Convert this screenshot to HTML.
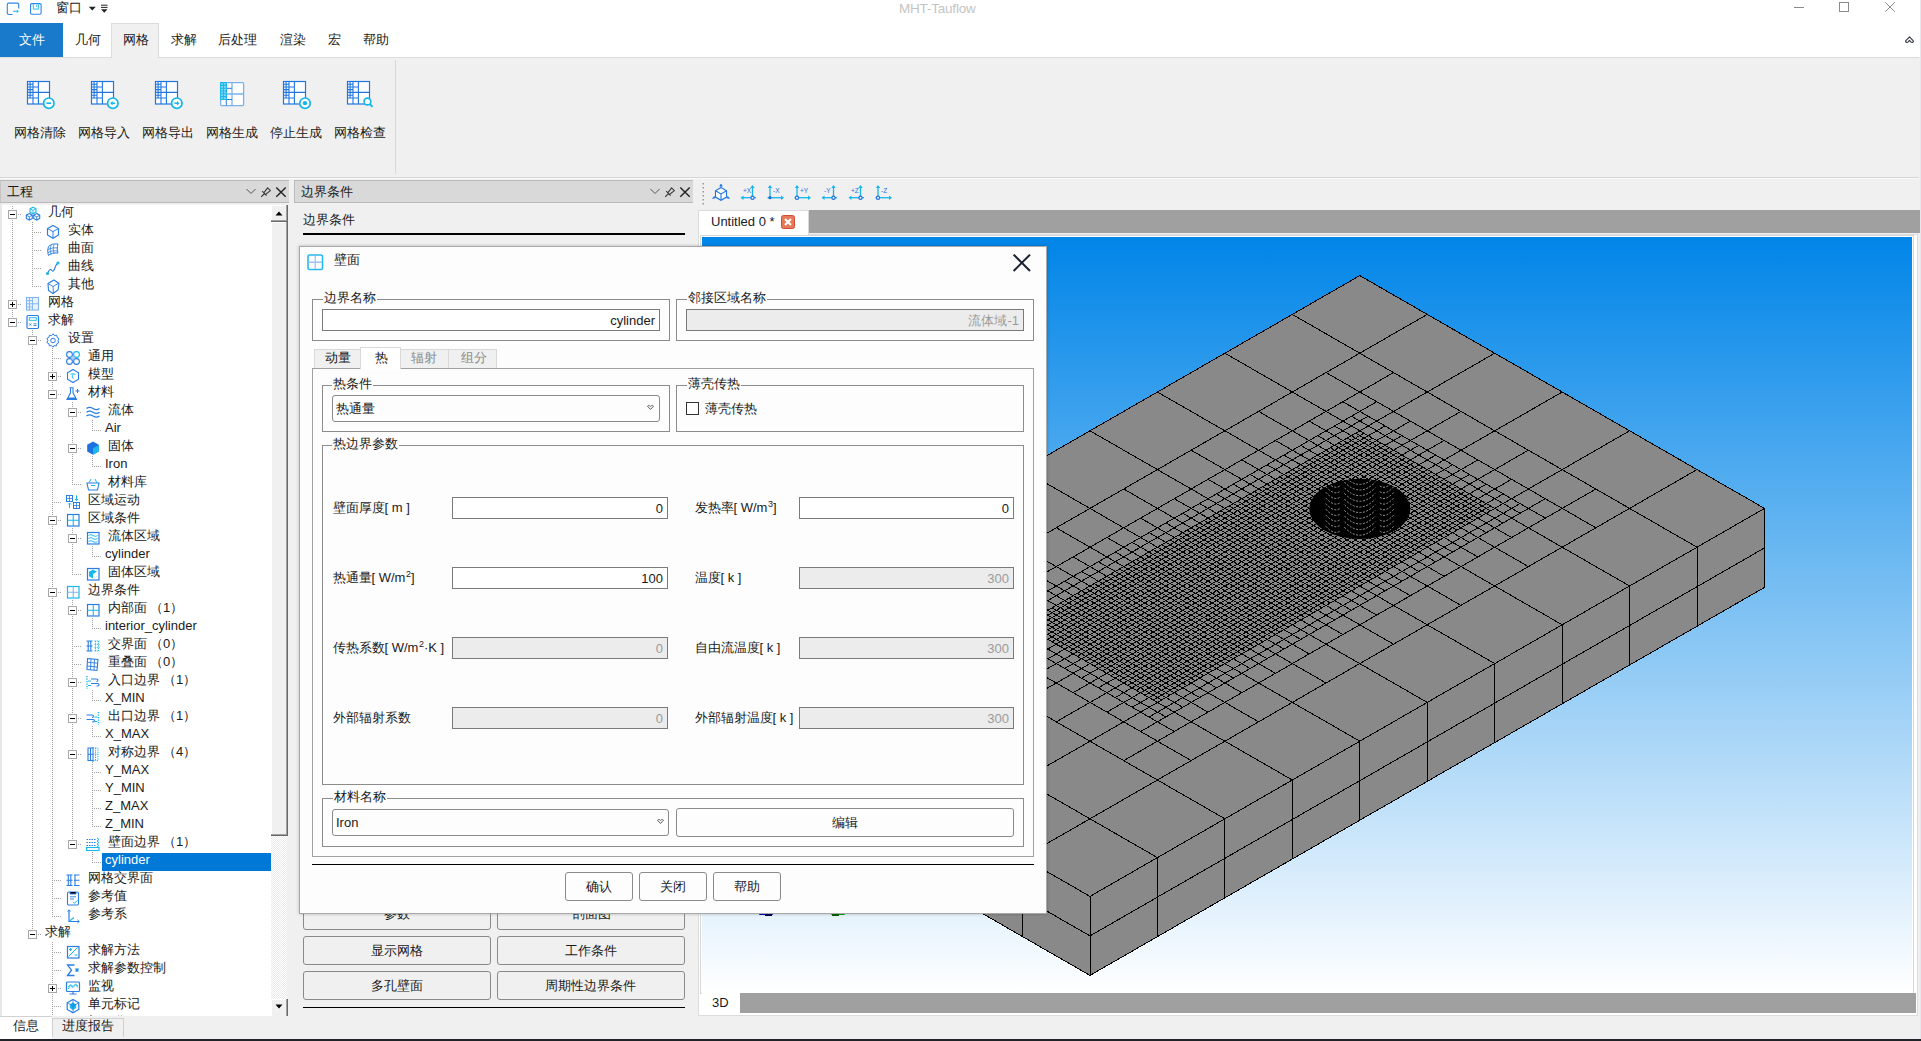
<!DOCTYPE html>
<html><head><meta charset="utf-8">
<style>
*{box-sizing:border-box;margin:0;padding:0}
html,body{width:1921px;height:1041px;overflow:hidden;background:#f0f0f0;font-family:"Liberation Sans",sans-serif;font-size:13px;color:#1a1a1a}
.a{position:absolute}
.t{position:absolute;white-space:nowrap;line-height:15px}
svg{position:absolute;overflow:visible}
</style></head><body>
<!-- ===== TITLE BAR ===== -->
<div class="a" style="left:0;top:0;width:1921px;height:57px;background:#fff"></div>
<svg style="left:0;top:0" width="120" height="20">
<path d="M12.5 14.5H8.8a1.5 1.5 0 0 1-1.5-1.5V4.6a1.5 1.5 0 0 1 1.5-1.5h8.4a1.5 1.5 0 0 1 1.5 1.5v4" fill="none" stroke="#2f86e8" stroke-width="1.1"/>
<path d="M13 11.3h5.2" stroke="#1ec0f0" stroke-width="1.1"/><path d="M16.8 13.3l2-2-2-1.9z" fill="#1ec0f0"/>
<rect x="30.5" y="3.6" width="10.6" height="10.6" rx="1.2" fill="none" stroke="#2f86e8" stroke-width="1.1"/>
<path d="M33.3 3.6v5.5h5v-5.5" fill="none" stroke="#1ec0f0" stroke-width="1"/><path d="M36.4 5.2v1.8" stroke="#1ec0f0" stroke-width="0.8"/>
<path d="M88.8 6.8h7l-3.5 3.6z" fill="#222"/>
<path d="M101 5.2h6.5M101 7.4h6.5" stroke="#222" stroke-width="1"/><path d="M101 9.2h6.5l-3.25 3.5z" fill="#222"/>
</svg>
<div class="t" style="left:56px;top:-0.5px;color:#1a1a1a">窗口</div>
<div class="t" style="left:899px;top:0.5px;color:#c4c4c4;font-size:13.5px;letter-spacing:-0.2px">MHT-Tauflow</div>
<svg style="left:1780px;top:0" width="141" height="50">
<path d="M14 7.5h10" stroke="#8a8a8a" stroke-width="1"/>
<rect x="59.5" y="2.5" width="9" height="9" fill="none" stroke="#8a8a8a" stroke-width="1"/>
<path d="M105.2 2.2l9.6 9.6M114.8 2.2l-9.6 9.6" stroke="#8a8a8a" stroke-width="1"/>
<path d="M129.5 36.9L125.9 40.7Q125.2 41.7 126.2 42.3Q127.4 42.8 128.2 41.9L129.5 40.3L130.8 41.9Q131.6 42.8 132.8 42.3Q133.8 41.7 133.1 40.7Z" fill="none" stroke="#3a3f48" stroke-width="1.2" stroke-linejoin="round"/>
</svg>
<div class="a" style="left:1920px;top:0;width:1px;height:1039px;background:#e4e8ee"></div>

<!-- ===== MENU ===== -->
<div class="a" style="left:0;top:23px;width:63px;height:35px;background:#1979ca"></div>
<div class="a" style="left:111px;top:23px;width:48px;height:35px;background:#f0f0f0;border:1px solid #dcdcdc;border-bottom:none"></div>
<div class="a" style="left:0;top:57px;width:111px;height:1px;background:#dcdcdc"></div>
<div class="a" style="left:159px;top:57px;width:1760px;height:1px;background:#dcdcdc"></div>
<div class="t" style="left:19px;top:31.5px;color:#fff">文件</div>
<div class="t" style="left:74.5px;top:31.5px">几何</div>
<div class="t" style="left:122.5px;top:31.5px">网格</div>
<div class="t" style="left:170.5px;top:31.5px">求解</div>
<div class="t" style="left:218px;top:31.5px">后处理</div>
<div class="t" style="left:279.5px;top:31.5px">渲染</div>
<div class="t" style="left:327.5px;top:31.5px">宏</div>
<div class="t" style="left:362.5px;top:31.5px">帮助</div>

<!-- ===== RIBBON ===== -->
<div class="a" style="left:0;top:177px;width:1919px;height:1px;background:#d5d5d5"></div><div class="a" style="left:0;top:178px;width:1919px;height:1px;background:#fafafa"></div>
<div class="a" style="left:395px;top:60px;width:1px;height:114px;background:#d8d8d8"></div>
<svg style="left:27px;top:81px" width="32" height="32">

<rect x="0.5" y="0.5" width="22" height="22.5" fill="#fff" stroke="#1f76e0" stroke-width="1.2"/>
<path d="M11.4 0.5v22.5M0.5 11.4h22M6 0.5v22.5M6 6h5.4M6 17h5.4M3.1 0.5v16.5M0.5 3.2h5.5M0.5 6h5.5M0.5 8.6h5.5M0.5 11.4h5.5M0.5 14.2h5.5M0.5 17h5.5" fill="none" stroke="#1f76e0" stroke-width="1.1"/>

<circle cx="21.8" cy="22.2" r="5.2" fill="#fff" stroke="#10b6e8" stroke-width="1.7"/><path d="M19.4 22.2h4.8" stroke="#10b6e8" stroke-width="1.6"/>
</svg>
<svg style="left:91px;top:81px" width="32" height="32">

<rect x="0.5" y="0.5" width="22" height="22.5" fill="#fff" stroke="#1f76e0" stroke-width="1.2"/>
<path d="M11.4 0.5v22.5M0.5 11.4h22M6 0.5v22.5M6 6h5.4M6 17h5.4M3.1 0.5v16.5M0.5 3.2h5.5M0.5 6h5.5M0.5 8.6h5.5M0.5 11.4h5.5M0.5 14.2h5.5M0.5 17h5.5" fill="none" stroke="#1f76e0" stroke-width="1.1"/>

<circle cx="21.8" cy="22.2" r="5.2" fill="#fff" stroke="#10b6e8" stroke-width="1.7"/><path d="M24.2 22.2h-3.6" stroke="#10b6e8" stroke-width="1.5"/><path d="M19.2 22.2l2.4-2.2v4.4z" fill="#10b6e8"/>
</svg>
<svg style="left:155px;top:81px" width="32" height="32">

<rect x="0.5" y="0.5" width="22" height="22.5" fill="#fff" stroke="#1f76e0" stroke-width="1.2"/>
<path d="M11.4 0.5v22.5M0.5 11.4h22M6 0.5v22.5M6 6h5.4M6 17h5.4M3.1 0.5v16.5M0.5 3.2h5.5M0.5 6h5.5M0.5 8.6h5.5M0.5 11.4h5.5M0.5 14.2h5.5M0.5 17h5.5" fill="none" stroke="#1f76e0" stroke-width="1.1"/>

<circle cx="21.8" cy="22.2" r="5.2" fill="#fff" stroke="#10b6e8" stroke-width="1.7"/><path d="M19.4 22.2h3.6" stroke="#10b6e8" stroke-width="1.5"/><path d="M24.4 22.2l-2.4-2.2v4.4z" fill="#10b6e8"/>
</svg>
<svg style="left:220px;top:82px" width="32" height="32">
<rect x="0.6" y="0.6" width="23" height="23" rx="1" fill="#fff" stroke="#7ab2ee" stroke-width="1.3"/>
<path d="M12 0.6v23M0.6 12h23" stroke="#7ab2ee" stroke-width="1.3"/>
<path d="M6.3 0.6v23M6.3 6.3h5.7M6.3 17.5h5.7" stroke="#2a7fe6" stroke-width="1"/>
<rect x="0.6" y="0.6" width="5.7" height="16.9" fill="#8fd8f4"/>
<path d="M0.6 0.6h5.7v16.9H0.6zM3.4 0.6v16.9M0.6 3.4h5.7M0.6 6.2h5.7M0.6 9h5.7M0.6 11.8h5.7M0.6 14.6h5.7" fill="none" stroke="#16b9ea" stroke-width="1.1"/>
</svg>
<svg style="left:283px;top:81px" width="32" height="32">

<rect x="0.5" y="0.5" width="22" height="22.5" fill="#fff" stroke="#1f76e0" stroke-width="1.2"/>
<path d="M11.4 0.5v22.5M0.5 11.4h22M6 0.5v22.5M6 6h5.4M6 17h5.4M3.1 0.5v16.5M0.5 3.2h5.5M0.5 6h5.5M0.5 8.6h5.5M0.5 11.4h5.5M0.5 14.2h5.5M0.5 17h5.5" fill="none" stroke="#1f76e0" stroke-width="1.1"/>

<circle cx="22" cy="22.2" r="5.2" fill="#fff" stroke="#10b6e8" stroke-width="1.7"/><circle cx="22" cy="22.2" r="2.1" fill="#10b6e8"/>
</svg>
<svg style="left:347px;top:81px" width="32" height="32">

<rect x="0.5" y="0.5" width="22" height="22.5" fill="#fff" stroke="#1f76e0" stroke-width="1.2"/>
<path d="M11.4 0.5v22.5M0.5 11.4h22M6 0.5v22.5M6 6h5.4M6 17h5.4M3.1 0.5v16.5M0.5 3.2h5.5M0.5 6h5.5M0.5 8.6h5.5M0.5 11.4h5.5M0.5 14.2h5.5M0.5 17h5.5" fill="none" stroke="#1f76e0" stroke-width="1.1"/>

<circle cx="20.4" cy="20.5" r="3.4" fill="#fff" stroke="#10b6e8" stroke-width="1.6"/><path d="M22.8 23l2.8 2.8" stroke="#10b6e8" stroke-width="1.8"/>
</svg>
<div class="t" style="left:13.75px;top:124.5px">网格清除</div>
<div class="t" style="left:77.75px;top:124.5px">网格导入</div>
<div class="t" style="left:141.75px;top:124.5px">网格导出</div>
<div class="t" style="left:205.75px;top:124.5px">网格生成</div>
<div class="t" style="left:269.75px;top:124.5px">停止生成</div>
<div class="t" style="left:333.75px;top:124.5px">网格检查</div>

<!-- ===== LEFT DOCK ===== -->
<div class="a" style="left:0;top:180px;width:289px;height:23px;background:#d9d9d9;border-top:1px solid #b9b9b9;border-bottom:1px solid #b9b9b9;border-left:1px solid #c4c4c4"></div>
<div class="t" style="left:7px;top:183.5px">工程</div>
<svg style="left:240px;top:180px" width="50" height="23">
<path d="M6.5 9l4.5 4.5 4.5-4.5" fill="none" stroke="#555" stroke-width="1"/>
<path d="M21.2 16.8l3.3-3.3M22.2 11.2l4.4 4.5M24 12.6l3.6-4.8 2.8 2.8-4.7 3.6" fill="none" stroke="#3a3a3a" stroke-width="1.1" stroke-linejoin="round"/>
<path d="M36.3 7.4l9.4 9.3M45.7 7.4l-9.4 9.3" stroke="#222" stroke-width="1.4"/>
</svg>
<div class="a" style="left:0;top:203px;width:2px;height:813px;background:#e8e8e8"></div>
<div class="a" style="left:271px;top:205px;width:17px;height:811px;background:#f0f0f0"></div>
<div class="a" style="left:271px;top:205px;width:17px;height:17px;background:#f0f0f0;border-right:1px solid #696969;border-bottom:1px solid #696969;box-shadow:inset -1px -1px #a0a0a0, inset 1px 1px #fff"></div>
<svg style="left:271px;top:205px" width="17" height="17"><path d="M4.5 10.5h7l-3.5-4z" fill="#000"/></svg>
<div class="a" style="left:271px;top:222px;width:17px;height:614px;background:#f0f0f0;border-right:1px solid #696969;border-bottom:1px solid #696969;box-shadow:inset -1px -1px #a0a0a0, inset 1px 1px #fff"></div>
<div class="a" style="left:271px;top:836px;width:16px;height:163px;background:repeating-conic-gradient(#fff 0 25%,#eaeaea 0 50%) 0 0/2px 2px"></div>
<div class="a" style="left:271px;top:999px;width:17px;height:17px;background:#f0f0f0;border-right:1px solid #696969;box-shadow:inset -1px 0 #a0a0a0, inset 1px 1px #fff"></div>
<svg style="left:271px;top:999px" width="17" height="17"><path d="M4.5 5.5h7l-3.5 4z" fill="#000"/></svg>
<div class="a" style="left:288px;top:203px;width:1px;height:813px;background:#f0f0f0"></div>
<div class="a" style="left:0;top:1016px;width:52px;height:23px;background:#fff;border-top:1px solid #d0d0d0"></div>
<div class="a" style="left:52px;top:1018px;width:72px;height:19px;background:#f0f0f0;border:1px solid #d0d0d0;border-bottom:none"></div>
<div class="t" style="left:12.5px;top:1018px">信息</div>
<div class="t" style="left:62px;top:1018px">进度报告</div>
<div class="a" style="left:2px;top:203px;width:269px;height:2px;background:#f0f0f0"></div>
<div class="a" style="left:2px;top:205px;width:269px;height:811px;overflow:hidden;background:#fff">
<svg style="left:0;top:0" width="269" height="812"><path d="M10.5 -1V19M12 9.5H20M10.5 17V37M30.5 17V37M32 27.5H40M10.5 35V55M30.5 35V55M32 45.5H40M10.5 53V73M30.5 53V73M32 63.5H40M10.5 71V91M30.5 71V82M32 81.5H40M10.5 89V109M12 99.5H20M10.5 107V118M12 117.5H20M30.5 125V145M32 135.5H40M30.5 143V163M50.5 143V163M52 153.5H60M30.5 161V181M50.5 161V181M52 171.5H60M30.5 179V199M50.5 179V199M52 189.5H60M30.5 197V217M50.5 197V217M70.5 197V217M72 207.5H80M30.5 215V235M50.5 215V235M70.5 215V235M90.5 215V226M92 225.5H100M30.5 233V253M50.5 233V253M70.5 233V253M72 243.5H80M30.5 251V271M50.5 251V271M70.5 251V271M90.5 251V262M92 261.5H100M30.5 269V289M50.5 269V289M70.5 269V280M72 279.5H80M30.5 287V307M50.5 287V307M52 297.5H60M30.5 305V325M50.5 305V325M52 315.5H60M30.5 323V343M50.5 323V343M70.5 323V343M72 333.5H80M30.5 341V361M50.5 341V361M70.5 341V361M90.5 341V352M92 351.5H100M30.5 359V379M50.5 359V379M70.5 359V370M72 369.5H80M30.5 377V397M50.5 377V397M52 387.5H60M30.5 395V415M50.5 395V415M70.5 395V415M72 405.5H80M30.5 413V433M50.5 413V433M70.5 413V433M90.5 413V424M92 423.5H100M30.5 431V451M50.5 431V451M70.5 431V451M72 441.5H80M30.5 449V469M50.5 449V469M70.5 449V469M72 459.5H80M30.5 467V487M50.5 467V487M70.5 467V487M72 477.5H80M30.5 485V505M50.5 485V505M70.5 485V505M90.5 485V496M92 495.5H100M30.5 503V523M50.5 503V523M70.5 503V523M72 513.5H80M30.5 521V541M50.5 521V541M70.5 521V541M90.5 521V532M92 531.5H100M30.5 539V559M50.5 539V559M70.5 539V559M72 549.5H80M30.5 557V577M50.5 557V577M70.5 557V577M90.5 557V577M92 567.5H100M30.5 575V595M50.5 575V595M70.5 575V595M90.5 575V595M92 585.5H100M30.5 593V613M50.5 593V613M70.5 593V613M90.5 593V613M92 603.5H100M30.5 611V631M50.5 611V631M70.5 611V631M90.5 611V622M92 621.5H100M30.5 629V649M50.5 629V649M70.5 629V640M72 639.5H80M30.5 647V667M50.5 647V667M90.5 647V658M92 657.5H100M30.5 665V685M50.5 665V685M52 675.5H60M30.5 683V703M50.5 683V703M52 693.5H60M30.5 701V721M50.5 701V712M52 711.5H60M30.5 719V730M32 729.5H40M50.5 737V757M52 747.5H60M50.5 755V775M52 765.5H60M50.5 773V793M52 783.5H60M50.5 791V811M52 801.5H60M50.5 809V820M52 819.5H60" stroke="#a0a0a0" stroke-width="1" stroke-dasharray="1 1" fill="none" shape-rendering="crispEdges"/><rect x="6.5" y="5.5" width="8" height="8" fill="#fff" stroke="#a8a8a8" stroke-width="1"/><path d="M8 9.5h5" stroke="#000" stroke-width="1"/><g transform="translate(23,1)"><path d="M8 1.2l3 1.6v3.3l-3 1.6-3-1.6V2.8z" fill="none" stroke="#17b8ec" stroke-width="1.1"/><path d="M5 2.8l3 1.6 3-1.6M8 4.4v3.3" fill="none" stroke="#17b8ec" stroke-width="0.9"/><path d="M4.3 7.6l3 1.6v3.3l-3 1.6-3-1.6V9.2zM11.7 7.6l3 1.6v3.3l-3 1.6-3-1.6V9.2z" fill="none" stroke="#2a7de1" stroke-width="1.1"/><path d="M1.3 9.2l3 1.6 3-1.6M4.3 10.8v3.3M8.7 9.2l3 1.6 3-1.6M11.7 10.8v3.3" fill="none" stroke="#2a7de1" stroke-width="0.9"/></g><g transform="translate(43,19)"><path d="M8 1.5l5.5 3v6.5L8 14.2 2.5 11V4.5z" fill="none" stroke="#2a7de1" stroke-width="1.2"/><path d="M2.5 4.5L8 7.6l5.5-3.1M8 7.6v6.6" fill="none" stroke="#2a7de1" stroke-width="1"/></g><g transform="translate(43,37)"><path d="M3.5 4.5c2-2 5-3 9.5-2.5-1 3-1 6 0 9-4.5-.5-7.5.5-9.5 2.5-1-3-1-6 0-9z" fill="none" stroke="#2a7de1" stroke-width="1"/><path d="M6 3.2c-1 3-1 6.5 0 9.5M9 2.4c-1 3-1 6.5 0 9.5M2.8 7.5c3-1.5 6-2 10-1.5M3 10.5c3-1.5 6-2 10-1.5" fill="none" stroke="#2a7de1" stroke-width="0.8"/></g><g transform="translate(43,55)"><path d="M2.5 13.5c1-3 3-5 4-3.5s2 2 3-1 2-5 3.5-6" fill="none" stroke="#2a7de1" stroke-width="1.1"/><circle cx="2.5" cy="13.5" r="1.6" fill="#17b8ec"/><circle cx="13" cy="3" r="1.6" fill="#17b8ec"/></g><g transform="translate(43,73)"><path d="M3 5.5l6-3.5 5 3.5-1 6.5-5 3.5-4.5-3z" fill="none" stroke="#2a7de1" stroke-width="1.1"/><path d="M3 5.5l5 3 6-3.5M8 8.5l.5 7" fill="none" stroke="#2a7de1" stroke-width="0.9"/></g><rect x="6.5" y="95.5" width="8" height="8" fill="#fff" stroke="#a8a8a8" stroke-width="1"/><path d="M8 99.5h5" stroke="#000" stroke-width="1"/><path d="M10.5 97v5" stroke="#000" stroke-width="1"/><g transform="translate(23,91)"><rect x="1.5" y="1.5" width="12" height="12.5" fill="#eaf3fd" stroke="#7fb4ee" stroke-width="1.1"/><path d="M7.5 1.5v12.5M1.5 7.8h12M4.5 1.5v12.5M1.5 4.6h6M1.5 11h6" stroke="#7fb4ee" stroke-width="0.9"/></g><rect x="6.5" y="113.5" width="8" height="8" fill="#fff" stroke="#a8a8a8" stroke-width="1"/><path d="M8 117.5h5" stroke="#000" stroke-width="1"/><g transform="translate(23,109)"><rect x="2" y="1.5" width="11.5" height="13" rx="1.2" fill="none" stroke="#2a7de1" stroke-width="1.2"/><rect x="4.3" y="3.7" width="7" height="2.6" fill="none" stroke="#17b8ec" stroke-width="0.9"/><path d="M4.3 9.5l2 2M6.3 9.5l-2 2M8.5 9.8h3M8.5 11.5h3" stroke="#2a7de1" stroke-width="0.9"/></g><rect x="26.5" y="131.5" width="8" height="8" fill="#fff" stroke="#a8a8a8" stroke-width="1"/><path d="M28 135.5h5" stroke="#000" stroke-width="1"/><g transform="translate(43,127)"><path d="M8 1.8l1.5 1.7 2.2-.3.4 2.2 1.9 1.2-1 2 .9 2-2 1.1-.5 2.2-2.2-.3L8 15.2l-1.5-1.6-2.2.3-.4-2.2-2-1.2 1-2-1-2 2-1.1.5-2.2 2.2.3z" fill="none" stroke="#2a7de1" stroke-width="1"/><circle cx="8" cy="8.5" r="2.3" fill="none" stroke="#2a7de1" stroke-width="1"/></g><g transform="translate(63,145)"><circle cx="4.5" cy="4.5" r="2.9" fill="none" stroke="#2a7de1" stroke-width="1.1"/><circle cx="11.5" cy="4.5" r="2.9" fill="none" stroke="#17b8ec" stroke-width="1.1"/><circle cx="4.5" cy="11.5" r="2.9" fill="none" stroke="#2a7de1" stroke-width="1.1"/><circle cx="11.5" cy="11.5" r="2.9" fill="none" stroke="#2a7de1" stroke-width="1.1"/><rect x="6" y="6" width="4" height="4" fill="#7fb4ee" opacity=".6"/></g><rect x="46.5" y="167.5" width="8" height="8" fill="#fff" stroke="#a8a8a8" stroke-width="1"/><path d="M48 171.5h5" stroke="#000" stroke-width="1"/><path d="M50.5 169v5" stroke="#000" stroke-width="1"/><g transform="translate(63,163)"><path d="M8 1.5l5.5 3.2v6.6L8 14.5l-5.5-3.2V4.7z" fill="none" stroke="#2a7de1" stroke-width="1.1"/><path d="M5.5 6.3c1-.7 3-.7 5 0M8 6.3c-1 1.5-1 3.5.5 4.5" fill="none" stroke="#17b8ec" stroke-width="1"/></g><rect x="46.5" y="185.5" width="8" height="8" fill="#fff" stroke="#a8a8a8" stroke-width="1"/><path d="M48 189.5h5" stroke="#000" stroke-width="1"/><g transform="translate(63,181)"><path d="M4.5 1.8h4M5.5 1.8v5L2 13.5h9.5L8 6.8v-5" fill="none" stroke="#2a7de1" stroke-width="1.1"/><path d="M3 11.5h7.5l1 2.3H2z" fill="#2a7de1"/><path d="M12.5 3v4M10.5 5h4" stroke="#2a7de1" stroke-width="1"/></g><rect x="66.5" y="203.5" width="8" height="8" fill="#fff" stroke="#a8a8a8" stroke-width="1"/><path d="M68 207.5h5" stroke="#000" stroke-width="1"/><g transform="translate(83,199)"><path d="M1.5 4.5c2-1.5 4-1.5 6.5 0s4.5 1.5 6.5 0M1.5 8.3c2-1.5 4-1.5 6.5 0s4.5 1.5 6.5 0M1.5 12c2-1.5 4-1.5 6.5 0s4.5 1.5 6.5 0" fill="none" stroke="#2a7de1" stroke-width="1.2"/></g><rect x="66.5" y="239.5" width="8" height="8" fill="#fff" stroke="#a8a8a8" stroke-width="1"/><path d="M68 243.5h5" stroke="#000" stroke-width="1"/><g transform="translate(83,235)"><path d="M8 1.5l5.8 3.3v6.6L8 14.7l-5.8-3.3V4.8z" fill="#1e6fe0"/><path d="M8 8.2l5.8-3.3v6.5L8 14.7z" fill="#17b8ec"/></g><g transform="translate(83,271)"><path d="M2 7h12l-1.5 7h-9z" fill="none" stroke="#2a7de1" stroke-width="1.1"/><path d="M4 7l2-4M12 7l-2-4M6 9.5h4" stroke="#17b8ec" stroke-width="1"/></g><g transform="translate(63,289)"><rect x="1.5" y="1.5" width="6" height="6" fill="none" stroke="#2a7de1" stroke-width="1"/><path d="M4.5 1.5v6M1.5 4.5h6" stroke="#2a7de1" stroke-width=".8"/><rect x="8.5" y="8.5" width="6" height="6" fill="none" stroke="#2a7de1" stroke-width="1"/><path d="M11.5 8.5v6M8.5 11.5h6" stroke="#2a7de1" stroke-width=".8"/><path d="M4.5 9v5M3 10.5l1.5-1.5 1.5 1.5M11.5 1.5v5M10 5l1.5 1.5L13 5" fill="none" stroke="#17b8ec" stroke-width="1"/></g><rect x="46.5" y="311.5" width="8" height="8" fill="#fff" stroke="#a8a8a8" stroke-width="1"/><path d="M48 315.5h5" stroke="#000" stroke-width="1"/><g transform="translate(63,307)"><rect x="2.5" y="2.5" width="11.5" height="11.5" fill="none" stroke="#2a7de1" stroke-width="1.2"/><path d="M8.25 2.5v11.5M2.5 8.25h11.5" stroke="#17b8ec" stroke-width="1.1"/></g><rect x="66.5" y="329.5" width="8" height="8" fill="#fff" stroke="#a8a8a8" stroke-width="1"/><path d="M68 333.5h5" stroke="#000" stroke-width="1"/><g transform="translate(83,325)"><rect x="2.5" y="2.5" width="11.5" height="11.5" fill="none" stroke="#2a7de1" stroke-width="1.2"/><path d="M3.5 5.5c1.5-1 3-1 4.5 0s3 1 4.5 0M3.5 8.5c1.5-1 3-1 4.5 0s3 1 4.5 0M3.5 11.5c1.5-1 3-1 4.5 0s3 1 4.5 0" fill="none" stroke="#17b8ec" stroke-width="1"/></g><g transform="translate(83,361)"><rect x="2.5" y="2.5" width="11.5" height="11.5" fill="none" stroke="#2a7de1" stroke-width="1.2"/><path d="M8 3.5l4 2.2v4.6L8 12.5l-4-2.2V5.7z" fill="#17b8ec"/><path d="M8 8v4.5l4-2.2V5.7z" fill="#fff"/></g><rect x="46.5" y="383.5" width="8" height="8" fill="#fff" stroke="#a8a8a8" stroke-width="1"/><path d="M48 387.5h5" stroke="#000" stroke-width="1"/><g transform="translate(63,379)"><rect x="2.5" y="2.5" width="11.5" height="11.5" fill="none" stroke="#17b8ec" stroke-width="1.2"/><path d="M8.25 2.5v11.5M2.5 8.25h11.5" stroke="#7fb4ee" stroke-width="1.1"/></g><rect x="66.5" y="401.5" width="8" height="8" fill="#fff" stroke="#a8a8a8" stroke-width="1"/><path d="M68 405.5h5" stroke="#000" stroke-width="1"/><g transform="translate(83,397)"><rect x="2.5" y="2.5" width="11.5" height="11.5" fill="none" stroke="#2a7de1" stroke-width="1.2"/><path d="M8.25 2.5v11.5M2.5 8.25h11.5" stroke="#17b8ec" stroke-width="1.1"/></g><g transform="translate(83,433)"><path d="M1.5 3h6M1.5 13h6M3.2 3v10M5.8 3v10M1.5 8h6" stroke="#2a7de1" stroke-width="1.1"/><path d="M9.5 3h5M9.5 6.3h5M9.5 9.7h5M9.5 13h5M10.5 3v10M13.5 3v10" stroke="#17b8ec" stroke-width="1" stroke-dasharray="1.2 1"/></g><g transform="translate(83,451)"><path d="M2.5 2.5l10.5 1-1 11-10-1z" fill="none" stroke="#2a7de1" stroke-width="1.1"/><path d="M6 2.8l-.5 11M9.5 3.2l-.5 11M2 6.2l10.7 1M1.8 10l10.6 1" stroke="#2a7de1" stroke-width="0.9"/></g><rect x="66.5" y="473.5" width="8" height="8" fill="#fff" stroke="#a8a8a8" stroke-width="1"/><path d="M68 477.5h5" stroke="#000" stroke-width="1"/><g transform="translate(83,469)"><path d="M6 5h5.5c2 0 2 2.5 0 2.5M6 9.5h6.5c2 0 2 2.5 0 2.5h-1" fill="none" stroke="#2a7de1" stroke-width="1.1"/><path d="M2 2v13" stroke="#17b8ec" stroke-width="1.4" stroke-dasharray="1.3 1.2"/><path d="M3 7h3M3 11.5h3" stroke="#17b8ec" stroke-width="1"/></g><rect x="66.5" y="509.5" width="8" height="8" fill="#fff" stroke="#a8a8a8" stroke-width="1"/><path d="M68 513.5h5" stroke="#000" stroke-width="1"/><g transform="translate(83,505)"><path d="M1.5 5h5.5c2 0 2 2.5 0 2.5M1.5 9.5h6.5c2 0 2 2.5 0 2.5H7" fill="none" stroke="#2a7de1" stroke-width="1.1"/><path d="M13.5 2v13" stroke="#17b8ec" stroke-width="1.4" stroke-dasharray="1.3 1.2"/><path d="M9.5 7h3M9.5 11.5h3" stroke="#17b8ec" stroke-width="1"/></g><rect x="66.5" y="545.5" width="8" height="8" fill="#fff" stroke="#a8a8a8" stroke-width="1"/><path d="M68 549.5h5" stroke="#000" stroke-width="1"/><g transform="translate(83,541)"><path d="M8 2H3v12.5h5M3 8.2h5M5.5 2v12.5" fill="none" stroke="#2a7de1" stroke-width="1.1"/><path d="M8 2h5v12.5H8M8 8.2h5M10.5 2v12.5" fill="none" stroke="#17b8ec" stroke-width="1" stroke-dasharray="1.2 1"/><path d="M8 1v15" stroke="#2a7de1" stroke-width="1"/></g><rect x="66.5" y="635.5" width="8" height="8" fill="#fff" stroke="#a8a8a8" stroke-width="1"/><path d="M68 639.5h5" stroke="#000" stroke-width="1"/><g transform="translate(83,631)"><path d="M1.5 3.5h10M1.5 6.5h10M1.5 9.5h10" stroke="#2a7de1" stroke-width="1" stroke-dasharray="1.5 1"/><path d="M12 2l2 1.5-2 1.5M12 5l2 1.5-2 1.5M12 8l2 1.5-2 1.5" fill="none" stroke="#17b8ec" stroke-width="1"/><rect x="1.5" y="11.5" width="12.5" height="3" fill="none" stroke="#17b8ec" stroke-width="1.1"/></g><g transform="translate(63,667)"><path d="M1.5 3h6M1.5 13.5h6M3.3 3v10.5M5.8 3v10.5M1.5 8.2h6" stroke="#2a7de1" stroke-width="1.1"/><path d="M9 3h5.5M9 8.2h5.5M9 13.5h5.5M10 3v10.5" stroke="#2a7de1" stroke-width="1.1"/></g><g transform="translate(63,685)"><rect x="2.5" y="2" width="11" height="13" rx="1.2" fill="none" stroke="#2a7de1" stroke-width="1.1"/><path d="M5 2v2h6V2M5 6.8h6M5 9h4" stroke="#2a7de1" stroke-width="0.9"/><path d="M8 12l1.5 1.2 3-2.8" fill="none" stroke="#17b8ec" stroke-width="1"/></g><g transform="translate(63,703)"><path d="M4 2v11.5h10" fill="none" stroke="#2a7de1" stroke-width="1.2"/><path d="M2.5 3.5L4 1.8l1.5 1.7M12.5 12l1.8 1.5-1.8 1.5" fill="none" stroke="#2a7de1" stroke-width="1"/><path d="M4 13.5l5-4" stroke="#17b8ec" stroke-width="1.1"/></g><rect x="26.5" y="725.5" width="8" height="8" fill="#fff" stroke="#a8a8a8" stroke-width="1"/><path d="M28 729.5h5" stroke="#000" stroke-width="1"/><g transform="translate(63,739)"><rect x="2.5" y="2.5" width="11.5" height="11.5" fill="none" stroke="#2a7de1" stroke-width="1.2"/><path d="M3.5 12.5l9-9M4 5.5h3M5.5 4v3M9.5 11h3" stroke="#17b8ec" stroke-width="1"/></g><g transform="translate(63,757)"><path d="M9.5 3H2.5l4 5.2-4 5.3h7" fill="none" stroke="#2a7de1" stroke-width="1.3"/><path d="M10.5 6.5l3 3M13.5 6.5l-3 3" stroke="#17b8ec" stroke-width="1.3"/><circle cx="12" cy="8" r="1.5" fill="#2a7de1"/></g><rect x="46.5" y="779.5" width="8" height="8" fill="#fff" stroke="#a8a8a8" stroke-width="1"/><path d="M48 783.5h5" stroke="#000" stroke-width="1"/><path d="M50.5 781v5" stroke="#000" stroke-width="1"/><g transform="translate(63,775)"><rect x="1.5" y="2" width="13" height="9.5" rx="1" fill="none" stroke="#2a7de1" stroke-width="1.2"/><path d="M3 9l2.5-3.5 2.5 2 2.5-3 2.5 3M3 7l2.5-2.5 2.5 2 2.5-2.5 2.5 2" fill="none" stroke="#17b8ec" stroke-width="0.9"/><path d="M4.5 14h7M8 11.5V14" stroke="#2a7de1" stroke-width="1.1"/></g><g transform="translate(63,793)"><path d="M8 1.5l5.8 3.3v6.6L8 14.7l-5.8-3.3V4.8z" fill="none" stroke="#2a7de1" stroke-width="1.2"/><path d="M8 4.5l3.2 1.8v3.8L8 12l-3.2-1.9V6.3z" fill="#17b8ec"/><path d="M2.2 4.8L8 8l5.8-3.2M8 8v6.7M8 1.5V8" fill="none" stroke="#2a7de1" stroke-width=".8"/></g><g transform="translate(63,811)"><rect x="2.5" y="2.5" width="11.5" height="11.5" fill="none" stroke="#2a7de1" stroke-width="1.2"/><path d="M3.5 12.5l9-9M4 5.5h3M5.5 4v3M9.5 11h3" stroke="#17b8ec" stroke-width="1"/></g></svg>
<div class="t" style="left:45.5px;top:-1px;">几何</div>
<div class="t" style="left:65.5px;top:17px;">实体</div>
<div class="t" style="left:65.5px;top:35px;">曲面</div>
<div class="t" style="left:65.5px;top:53px;">曲线</div>
<div class="t" style="left:65.5px;top:71px;">其他</div>
<div class="t" style="left:45.5px;top:89px;">网格</div>
<div class="t" style="left:45.5px;top:107px;">求解</div>
<div class="t" style="left:65.5px;top:125px;">设置</div>
<div class="t" style="left:85.5px;top:143px;">通用</div>
<div class="t" style="left:85.5px;top:161px;">模型</div>
<div class="t" style="left:85.5px;top:179px;">材料</div>
<div class="t" style="left:105.5px;top:197px;">流体</div>
<div class="t" style="left:103px;top:215px;">Air</div>
<div class="t" style="left:105.5px;top:233px;">固体</div>
<div class="t" style="left:103px;top:251px;">Iron</div>
<div class="t" style="left:105.5px;top:269px;">材料库</div>
<div class="t" style="left:85.5px;top:287px;">区域运动</div>
<div class="t" style="left:85.5px;top:305px;">区域条件</div>
<div class="t" style="left:105.5px;top:323px;">流体区域</div>
<div class="t" style="left:103px;top:341px;">cylinder</div>
<div class="t" style="left:105.5px;top:359px;">固体区域</div>
<div class="t" style="left:85.5px;top:377px;">边界条件</div>
<div class="t" style="left:105.5px;top:395px;">内部面 （1）</div>
<div class="t" style="left:103px;top:413px;">interior_cylinder</div>
<div class="t" style="left:105.5px;top:431px;">交界面 （0）</div>
<div class="t" style="left:105.5px;top:449px;">重叠面 （0）</div>
<div class="t" style="left:105.5px;top:467px;">入口边界 （1）</div>
<div class="t" style="left:103px;top:485px;">X_MIN</div>
<div class="t" style="left:105.5px;top:503px;">出口边界 （1）</div>
<div class="t" style="left:103px;top:521px;">X_MAX</div>
<div class="t" style="left:105.5px;top:539px;">对称边界 （4）</div>
<div class="t" style="left:103px;top:557px;">Y_MAX</div>
<div class="t" style="left:103px;top:575px;">Y_MIN</div>
<div class="t" style="left:103px;top:593px;">Z_MAX</div>
<div class="t" style="left:103px;top:611px;">Z_MIN</div>
<div class="t" style="left:105.5px;top:629px;">壁面边界 （1）</div>
<div class="a" style="left:100px;top:648px;width:169px;height:18px;background:#0078d7"></div>
<div class="t" style="left:103px;top:647px;color:#fff;">cylinder</div>
<div class="t" style="left:85.5px;top:665px;">网格交界面</div>
<div class="t" style="left:85.5px;top:683px;">参考值</div>
<div class="t" style="left:85.5px;top:701px;">参考系</div>
<div class="t" style="left:43px;top:719px;">求解</div>
<div class="t" style="left:85.5px;top:737px;">求解方法</div>
<div class="t" style="left:85.5px;top:755px;">求解参数控制</div>
<div class="t" style="left:85.5px;top:773px;">监视</div>
<div class="t" style="left:85.5px;top:791px;">单元标记</div>
<div class="t" style="left:85.5px;top:809px;">初始化</div>
</div>

<!-- ===== MID DOCK ===== -->
<div class="a" style="left:294px;top:180px;width:399px;height:23px;background:#d9d9d9;border:1px solid #b9b9b9;border-right:none"></div>
<div class="t" style="left:300.5px;top:183.5px">边界条件</div>
<svg style="left:644px;top:180px" width="50" height="23">
<path d="M6.5 9l4.5 4.5 4.5-4.5" fill="none" stroke="#555" stroke-width="1"/>
<path d="M21.2 16.8l3.3-3.3M22.2 11.2l4.4 4.5M24 12.6l3.6-4.8 2.8 2.8-4.7 3.6" fill="none" stroke="#3a3a3a" stroke-width="1.1" stroke-linejoin="round"/>
<path d="M36.3 7.4l9.4 9.3M45.7 7.4l-9.4 9.3" stroke="#222" stroke-width="1.4"/>
</svg>
<div class="t" style="left:303px;top:211.5px">边界条件</div>
<div class="a" style="left:303px;top:233px;width:382px;height:2px;background:#000"></div>
<div class="a" style="left:303px;top:902px;width:188px;height:28px;background:#f0f0f0;border:1px solid #8a8a8a;border-radius:3px"></div>
<div class="a" style="left:497px;top:902px;width:188px;height:28px;background:#f0f0f0;border:1px solid #8a8a8a;border-radius:3px"></div>
<div class="a" style="left:303px;top:936px;width:188px;height:29px;background:#f0f0f0;border:1px solid #8a8a8a;border-radius:3px"></div>
<div class="a" style="left:497px;top:936px;width:188px;height:29px;background:#f0f0f0;border:1px solid #8a8a8a;border-radius:3px"></div>
<div class="a" style="left:303px;top:971px;width:188px;height:29px;background:#f0f0f0;border:1px solid #8a8a8a;border-radius:3px"></div>
<div class="a" style="left:497px;top:971px;width:188px;height:29px;background:#f0f0f0;border:1px solid #8a8a8a;border-radius:3px"></div>
<div class="t" style="left:384px;top:906px">参数</div>
<div class="t" style="left:571.5px;top:906px">剖面图</div>
<div class="t" style="left:371px;top:942.5px">显示网格</div>
<div class="t" style="left:565px;top:942.5px">工作条件</div>
<div class="t" style="left:371px;top:977.5px">多孔壁面</div>
<div class="t" style="left:545px;top:977.5px">周期性边界条件</div>
<div class="a" style="left:303px;top:1007px;width:382px;height:1px;background:#000"></div>

<!-- ===== VIEWPORT ===== -->
<svg style="left:700px;top:180px" width="200" height="28">
<g fill="#9a9a9a"><rect x="2.5" y="3" width="1.5" height="1.5"/><rect x="2.5" y="7" width="1.5" height="1.5"/><rect x="2.5" y="11" width="1.5" height="1.5"/><rect x="2.5" y="15" width="1.5" height="1.5"/><rect x="2.5" y="19" width="1.5" height="1.5"/><rect x="2.5" y="23" width="1.5" height="1.5"/></g>
<g>
<path d="M21 7.5l5.5 3.2v6.4L21 20.3l-5.5-3.2v-6.4z" fill="#fff" stroke="#1f76e0" stroke-width="1.1"/>
<path d="M15.5 10.7L21 13.9l5.5-3.2M21 13.9v6.4" fill="none" stroke="#1f76e0" stroke-width="1.1"/>
<path d="M21 4.3v3.2" stroke="#1f76e0" stroke-width="1"/><path d="M19.2 6.2L21 3.8l1.8 2.4z" fill="#1f76e0"/>
<path d="M12 19l2.2-3.3 1.2 2.6zM30 19l-2.2-3.3-1.2 2.6z" fill="#1f76e0"/>
</g>
<g id="axv">
<path d="M52.5 19V6.5" stroke="#16b6ea" stroke-width="1.3"/><path d="M50.3 8l2.2-3 2.2 3z" fill="#16b6ea"/>
<path d="M56 17.7H42.5" stroke="#16b6ea" stroke-width="1.3"/><path d="M43.5 15.5l-3 2.2 3 2.2z" fill="#16b6ea"/>
<circle cx="52.5" cy="17.7" r="1.6" fill="#fff" stroke="#1f6fe0" stroke-width="1.2"/>
<text x="43" y="13.3" font-size="6.5" fill="#1f6fe0" font-family="Liberation Sans">+X</text>
</g>
<g transform="translate(27,0)">
<path d="M43 19V6.5" stroke="#16b6ea" stroke-width="1.3"/><path d="M40.8 8l2.2-3 2.2 3z" fill="#16b6ea"/>
<path d="M40.5 17.7H55" stroke="#16b6ea" stroke-width="1.3"/><path d="M54 15.5l3 2.2-3 2.2z" fill="#16b6ea"/>
<circle cx="43" cy="17.7" r="1.6" fill="#1f6fe0"/>
<text x="46" y="13.3" font-size="6.5" fill="#1f6fe0" font-family="Liberation Sans">-X</text>
</g>
<g transform="translate(54,0)">
<path d="M43 19V6.5" stroke="#16b6ea" stroke-width="1.3"/><path d="M40.8 8l2.2-3 2.2 3z" fill="#16b6ea"/>
<path d="M40.5 17.7H55" stroke="#16b6ea" stroke-width="1.3"/><path d="M54 15.5l3 2.2-3 2.2z" fill="#16b6ea"/>
<circle cx="43" cy="17.7" r="1.6" fill="#fff" stroke="#1f6fe0" stroke-width="1.2"/>
<text x="46" y="13.3" font-size="6.5" fill="#1f6fe0" font-family="Liberation Sans">+Y</text>
</g>
<g transform="translate(81,0)">
<path d="M52.5 19V6.5" stroke="#16b6ea" stroke-width="1.3"/><path d="M50.3 8l2.2-3 2.2 3z" fill="#16b6ea"/>
<path d="M56 17.7H42.5" stroke="#16b6ea" stroke-width="1.3"/><path d="M43.5 15.5l-3 2.2 3 2.2z" fill="#16b6ea"/>
<circle cx="52.5" cy="17.7" r="1.6" fill="#fff" stroke="#1f6fe0" stroke-width="1.2"/>
<text x="43" y="13.3" font-size="6.5" fill="#1f6fe0" font-family="Liberation Sans">-Y</text>
</g>
<g transform="translate(108,0)">
<path d="M52.5 19V6.5" stroke="#16b6ea" stroke-width="1.3"/><path d="M50.3 8l2.2-3 2.2 3z" fill="#16b6ea"/>
<path d="M56 17.7H42.5" stroke="#16b6ea" stroke-width="1.3"/><path d="M43.5 15.5l-3 2.2 3 2.2z" fill="#16b6ea"/>
<circle cx="52.5" cy="17.7" r="1.6" fill="#fff" stroke="#1f6fe0" stroke-width="1.2"/>
<text x="43" y="13.3" font-size="6.5" fill="#1f6fe0" font-family="Liberation Sans">+Z</text>
</g>
<g transform="translate(135,0)">
<path d="M43 19V6.5" stroke="#16b6ea" stroke-width="1.3"/><path d="M40.8 8l2.2-3 2.2 3z" fill="#16b6ea"/>
<path d="M40.5 17.7H55" stroke="#16b6ea" stroke-width="1.3"/><path d="M54 15.5l3 2.2-3 2.2z" fill="#16b6ea"/>
<circle cx="43" cy="17.7" r="1.6" fill="#fff" stroke="#1f6fe0" stroke-width="1.2"/>
<text x="46" y="13.3" font-size="6.5" fill="#1f6fe0" font-family="Liberation Sans">-Z</text>
</g>
</svg>
<div class="a" style="left:698px;top:234px;width:1220px;height:782px;background:#fff;border:1px solid #dcdcdc"></div>
<div class="a" style="left:698px;top:210px;width:111px;height:25px;background:#fff;border:1px solid #dadada;border-bottom:none"></div>
<div class="a" style="left:809px;top:210px;width:1111px;height:23px;background:#a0a0a0"></div>
<div class="t" style="left:711px;top:214px;color:#1a1a2a">Untitled 0 *</div>
<svg style="left:780px;top:214px" width="16" height="16"><rect x="1.5" y="1.5" width="13" height="13" rx="2" fill="#e57a5a" stroke="#d44b36" stroke-width="1"/><path d="M5 5l6 6M11 5l-6 6" stroke="#fff" stroke-width="2"/></svg>
<div class="a" style="left:700px;top:235px;width:1214px;height:759px;border:1px solid #d8d8d8"></div>
<div class="a" style="left:702px;top:237px;width:1210px;height:755px;background:linear-gradient(#0085e8,#ffffff);overflow:hidden">
<svg style="left:0;top:0" width="1211" height="755"><path d="M657.8 38.6L1062.5 271.4L388.0 659.4L-16.7 426.6ZM1062.5 271.4L388.0 659.4L388.0 738.4L1062.5 350.4ZM-16.7 426.6L388.0 659.4L388.0 738.4L-16.7 505.6Z" fill="#898989"/><path d="M657.8 38.6L1062.5 271.4M590.3 77.4L995.0 310.2M522.9 116.2L927.6 349.0M455.4 155.0L860.2 387.8M388.0 193.8L792.7 426.6M320.5 232.6L725.2 465.4M253.1 271.4L657.8 504.2M185.6 310.2L590.3 543.0M118.2 349.0L522.9 581.8M50.7 387.8L455.4 620.6M-16.7 426.6L388.0 659.4M624.1 135.6L893.9 290.8M640.9 164.7L843.3 281.1M649.4 179.2L818.0 276.2M556.6 174.4L826.4 329.6M607.2 184.1L809.6 300.5M632.5 189.0L801.1 286.0M615.6 198.6L784.3 295.6M573.5 203.5L775.8 319.9M598.8 208.4L767.4 305.4M581.9 218.1L750.5 315.0M489.2 213.2L759.0 368.4M539.8 222.9L742.1 339.3M565.1 227.8L733.7 324.8M548.2 237.5L716.8 334.5M506.0 242.3L708.4 358.7M531.3 247.1L700.0 344.1M514.5 256.9L683.1 353.9M421.7 252.0L691.5 407.2M472.3 261.7L674.7 378.1M497.6 266.6L666.2 363.5M480.7 276.2L649.4 373.2M438.6 281.1L640.9 397.5M463.9 286.0L632.5 383.0M447.0 295.6L615.6 392.6M354.3 290.8L624.1 446.0M404.9 300.5L607.2 416.9M430.2 305.4L598.8 402.4M413.3 315.0L581.9 412.0M371.1 319.9L573.5 436.3M396.4 324.8L565.1 421.8M379.6 334.5L548.2 431.5M286.8 329.6L556.6 484.8M337.4 339.3L539.8 455.7M362.7 344.1L531.3 441.1M345.8 353.9L514.5 450.8M303.7 358.7L506.0 475.1M329.0 363.5L497.6 460.5M312.1 373.2L480.7 470.2M219.4 368.4L489.2 523.6M270.0 378.1L472.3 494.5M295.3 383.0L463.9 480.0M653.6 196.2L788.5 273.8M645.2 201.1L780.1 278.7M636.7 205.9L771.6 283.5M628.3 210.8L763.2 288.4M619.9 215.6L754.8 293.2M611.4 220.5L746.3 298.1M603.0 225.3L737.9 302.9M594.6 230.2L729.5 307.8M586.1 235.0L721.0 312.6M577.7 239.9L712.6 317.5M569.3 244.7L704.2 322.3M560.8 249.6L695.7 327.2M552.4 254.4L687.3 332.0M544.0 259.3L678.9 336.9M535.5 264.1L670.4 341.7M527.1 269.0L662.0 346.6M518.7 273.8L653.6 351.4M510.3 278.7L645.2 356.3M501.8 283.5L636.7 361.1M493.4 288.4L628.3 366.0M485.0 293.2L619.9 370.8M476.5 298.1L611.4 375.7M468.1 302.9L603.0 380.5M459.7 307.8L594.6 385.4M451.2 312.6L586.1 390.2M442.8 317.5L577.7 395.1M434.4 322.3L569.3 399.9M425.9 327.2L560.8 404.8M417.5 332.0L552.4 409.6M409.1 336.9L544.0 414.5M400.6 341.7L535.5 419.3M392.2 346.6L527.1 424.2M383.8 351.4L518.7 429.0M375.4 356.3L510.3 433.9M366.9 361.1L501.8 438.7M358.5 366.0L493.4 443.6M350.1 370.8L485.0 448.4M341.6 375.7L476.5 453.3M333.2 380.5L468.1 458.1M324.8 385.4L459.7 463.0M657.8 38.6L-16.7 426.6M725.2 77.4L50.7 465.4M792.7 116.2L118.2 504.2M691.5 135.6L219.4 407.2M674.7 164.7L270.0 397.5M666.2 179.2L295.3 392.6M860.2 155.0L185.6 543.0M759.0 174.4L286.8 446.0M708.4 184.1L303.7 416.9M683.1 189.0L312.1 402.4M700.0 198.6L329.0 412.0M742.1 203.5L337.4 436.3M716.8 208.4L345.8 421.8M733.7 218.1L362.7 431.5M662.0 196.2L324.8 390.2M670.4 201.1L333.2 395.1M678.9 205.9L341.6 399.9M687.3 210.8L350.1 404.8M695.7 215.6L358.5 409.6M704.2 220.5L366.9 414.5M712.6 225.3L375.4 419.3M721.0 230.2L383.8 424.2M927.6 193.8L253.1 581.8M826.4 213.2L354.3 484.8M775.8 222.9L371.1 455.7M750.5 227.8L379.6 441.1M767.4 237.5L396.4 450.8M809.6 242.3L404.9 475.1M784.3 247.1L413.3 460.5M801.1 256.9L430.2 470.2M729.5 235.0L392.2 429.0M737.9 239.9L400.6 433.9M746.3 244.7L409.1 438.7M754.8 249.6L417.5 443.6M763.2 254.4L425.9 448.4M771.6 259.3L434.4 453.3M780.1 264.1L442.8 458.1M788.5 269.0L451.2 463.0M995.0 232.6L320.5 620.6M893.9 252.0L421.7 523.6M843.3 261.7L438.6 494.5M818.0 266.6L447.0 480.0M1062.5 271.4L388.0 659.4M1062.5 271.4V350.4M995.0 310.2V389.2M927.6 349.0V428.0M860.2 387.8V466.8M792.7 426.6V505.6M725.2 465.4V544.4M657.8 504.2V583.2M590.3 543.0V622.0M522.9 581.8V660.8M455.4 620.6V699.6M388.0 659.4V738.4M-16.7 426.6V505.6M50.7 465.4V544.4M118.2 504.2V583.2M185.6 543.0V622.0M253.1 581.8V660.8M320.5 620.6V699.6M388.0 659.4V738.4M1062.5 310.9L388.0 698.9L-16.7 466.1M1062.5 350.4L388.0 738.4L-16.7 505.6" stroke="#000" stroke-width="1" fill="none" shape-rendering="crispEdges"/><path d="M657.8 38.6L1062.5 271.4L388.0 659.4L-16.7 426.6ZM1062.5 271.4L388.0 659.4L388.0 738.4L1062.5 350.4ZM-16.7 426.6L388.0 659.4L388.0 738.4L-16.7 505.6Z" stroke="#000" stroke-width="1" fill="none" shape-rendering="crispEdges"/><ellipse cx="657.8" cy="271.9" rx="50.4" ry="30.2" fill="#000"/><path d="M642.3 239.4Q657.8 255.4 673.3 239.4M642.3 245.0Q657.8 261.0 673.3 245.0M642.3 250.7Q657.8 266.7 673.3 250.7M642.3 256.3Q657.8 272.3 673.3 256.3M642.3 262.0Q657.8 278.0 673.3 262.0M642.3 267.6Q657.8 283.6 673.3 267.6M642.3 273.3Q657.8 289.3 673.3 273.3M642.3 278.9Q657.8 294.9 673.3 278.9M642.3 284.6Q657.8 300.6 673.3 284.6M642.3 290.2Q657.8 306.2 673.3 290.2M623.8 244.0Q631.8 253.0 637.8 249.0M677.8 249.0Q683.8 253.0 691.8 244.0M623.8 249.6Q631.8 258.6 637.8 254.6M677.8 254.6Q683.8 258.6 691.8 249.6M623.8 255.3Q631.8 264.3 637.8 260.3M677.8 260.3Q683.8 264.3 691.8 255.3M623.8 260.9Q631.8 269.9 637.8 265.9M677.8 265.9Q683.8 269.9 691.8 260.9M623.8 266.6Q631.8 275.6 637.8 271.6M677.8 271.6Q683.8 275.6 691.8 266.6M623.8 272.2Q631.8 281.2 637.8 277.2M677.8 277.2Q683.8 281.2 691.8 272.2M623.8 277.9Q631.8 286.9 637.8 282.9M677.8 282.9Q683.8 286.9 691.8 277.9M623.8 283.5Q631.8 292.5 637.8 288.5M677.8 288.5Q683.8 292.5 691.8 283.5M623.8 289.2Q631.8 298.2 637.8 294.2M677.8 294.2Q683.8 298.2 691.8 289.2" fill="none" stroke="#9c9c9c" stroke-width="1" stroke-dasharray="2 1.5"/></svg>
</div>
<div class="a" style="left:702px;top:993px;width:38px;height:20px;background:#fff"></div>
<div class="a" style="left:740px;top:993px;width:1176px;height:20px;background:#a0a0a0"></div>
<div class="t" style="left:712px;top:995px">3D</div>
<div class="a" style="left:759px;top:913px;width:14px;height:2px;background:#0000c8;border-radius:1px"></div>
<div class="a" style="left:765px;top:914px;width:7px;height:2px;background:#000050"></div>
<div class="a" style="left:831px;top:913px;width:14px;height:2px;background:#00b000;border-radius:1px"></div>
<div class="a" style="left:832px;top:914px;width:7px;height:2px;background:#006000"></div>

<!-- ===== DIALOG ===== -->
<div class="a" style="left:299px;top:246px;width:748px;height:668px;background:#fdfdfd;border:1px solid #a8a8a8;box-shadow:0 0 3px rgba(0,0,0,.25)"></div>
<svg style="left:307px;top:254px" width="17" height="17"><rect x="1" y="1" width="14.5" height="14.5" rx="1.5" fill="#fff" stroke="#29b8ec" stroke-width="1.6"/><path d="M8.25 1.5v13.5M1.5 8.25h13.5" stroke="#9cc6f2" stroke-width="1.3"/></svg>
<div class="t" style="left:334px;top:252px">壁面</div>
<svg style="left:1010px;top:251px" width="24" height="24"><path d="M4.3 4.3l15 15M19.3 4.3l-15 15" stroke="#1c2333" stroke-width="2" stroke-linecap="square"/></svg>
<style>
.gb{position:absolute;border:1px solid #8c8c8c}
.gt{position:absolute;white-space:nowrap;line-height:15px;background:#fdfdfd;padding:0 1px}
.in{position:absolute;border:1px solid #7a7a7a;background:#fff;text-align:right;line-height:15px;white-space:nowrap;padding-right:4px}
.dis{background:#ececec;color:#9b9b9b}
.cb{position:absolute;border:1px solid #8a8a8a;border-radius:3px;background:#fdfdfd;line-height:15px;white-space:nowrap;padding-left:3px}
.btn{position:absolute;border:1px solid #8a8a8a;border-radius:3px;background:#fdfdfd;text-align:center;line-height:15px;white-space:nowrap}
.lb{position:absolute;white-space:nowrap;line-height:15px}
.lb sup{font-size:9px;vertical-align:0;position:relative;top:-5px;margin-left:.5px}
</style>
<div class="gb" style="left:312px;top:299px;width:358px;height:42px"></div>
<div class="gt" style="left:323px;top:289.5px">边界名称</div>
<div class="in" style="left:322px;top:309px;width:338px;height:22px;padding-top:2.5px">cylinder</div>
<div class="gb" style="left:676px;top:299px;width:358px;height:42px"></div>
<div class="gt" style="left:687px;top:289.5px">邻接区域名称</div>
<div class="in dis" style="left:686px;top:309px;width:338px;height:22px;padding-top:2.5px">流体域-1</div>
<div class="a" style="left:314px;top:349px;width:47px;height:20px;background:#f0f0f0;border:1px solid #d9d9d9;border-bottom:none"></div>
<div class="a" style="left:400px;top:349px;width:49px;height:20px;background:#f0f0f0;border:1px solid #d9d9d9;border-bottom:none"></div>
<div class="a" style="left:448px;top:349px;width:49px;height:20px;background:#f0f0f0;border:1px solid #d9d9d9;border-bottom:none"></div>
<div class="gb" style="left:312px;top:368px;width:722px;height:489px;border-color:#a0a0a0"></div>
<div class="a" style="left:360px;top:347px;width:41px;height:22px;background:#fff;border:1px solid #d9d9d9;border-bottom:none"></div>
<div class="lb" style="left:325px;top:350px">动量</div>
<div class="lb" style="left:374.5px;top:349.5px">热</div>
<div class="lb" style="left:411px;top:350px;color:#8c8c8c">辐射</div>
<div class="lb" style="left:461px;top:350px;color:#8c8c8c">组分</div>
<div class="gb" style="left:322px;top:385px;width:348px;height:47px"></div>
<div class="gt" style="left:332px;top:376px">热条件</div>
<div class="cb" style="left:332px;top:395px;width:328px;height:27px;padding-top:5px">热通量</div>
<svg style="left:644px;top:402px" width="14" height="12"><path d="M3.5 4.2c.8-1 1.8-1 3 .2 1.2-1.2 2.2-1.2 3-.2L6.5 7.5z" fill="none" stroke="#606060" stroke-width="1"/></svg>
<div class="gb" style="left:676px;top:385px;width:348px;height:47px"></div>
<div class="gt" style="left:687px;top:376px">薄壳传热</div>
<div class="a" style="left:686px;top:402px;width:13px;height:13px;border:1px solid #333;background:#fff"></div>
<div class="lb" style="left:704.5px;top:400.5px">薄壳传热</div>
<div class="gb" style="left:322px;top:445px;width:702px;height:340px"></div>
<div class="gt" style="left:332px;top:436px">热边界参数</div>
<div class="lb" style="left:332.5px;top:500px">壁面厚度[ m ]</div>
<div class="in" style="left:452px;top:497px;width:216px;height:22px;padding-top:3px">0</div>
<div class="lb" style="left:694.5px;top:500px">发热率[ W/m<sup>3</sup>]</div>
<div class="in" style="left:799px;top:497px;width:215px;height:22px;padding-top:3px">0</div>
<div class="lb" style="left:332.5px;top:570px">热通量[ W/m<sup>2</sup>]</div>
<div class="in" style="left:452px;top:567px;width:216px;height:22px;padding-top:3px">100</div>
<div class="lb" style="left:694.5px;top:570px">温度[ k ]</div>
<div class="in dis" style="left:799px;top:567px;width:215px;height:22px;padding-top:3px">300</div>
<div class="lb" style="left:332.5px;top:640px">传热系数[ W/m<sup>2</sup>·K ]</div>
<div class="in dis" style="left:452px;top:637px;width:216px;height:22px;padding-top:3px">0</div>
<div class="lb" style="left:694.5px;top:640px">自由流温度[ k ]</div>
<div class="in dis" style="left:799px;top:637px;width:215px;height:22px;padding-top:3px">300</div>
<div class="lb" style="left:332.5px;top:710px">外部辐射系数</div>
<div class="in dis" style="left:452px;top:707px;width:216px;height:22px;padding-top:3px">0</div>
<div class="lb" style="left:694.5px;top:710px">外部辐射温度[ k ]</div>
<div class="in dis" style="left:799px;top:707px;width:215px;height:22px;padding-top:3px">300</div>
<div class="gb" style="left:322px;top:798px;width:702px;height:49px"></div>
<div class="gt" style="left:333px;top:789px">材料名称</div>
<div class="cb" style="left:332px;top:809px;width:337px;height:27px;padding-top:5px">Iron</div>
<svg style="left:654px;top:816px" width="14" height="12"><path d="M3.5 4.2c.8-1 1.8-1 3 .2 1.2-1.2 2.2-1.2 3-.2L6.5 7.5z" fill="none" stroke="#606060" stroke-width="1"/></svg>
<div class="btn" style="left:676px;top:808px;width:338px;height:29px;padding-top:6px">编辑</div>
<div class="a" style="left:312px;top:864px;width:722px;height:1px;background:#000"></div>
<div class="btn" style="left:565px;top:872px;width:68px;height:29px;padding-top:6px">确认</div>
<div class="btn" style="left:639px;top:872px;width:68px;height:29px;padding-top:6px">关闭</div>
<div class="btn" style="left:713px;top:872px;width:68px;height:29px;padding-top:6px">帮助</div>

<div class="a" style="left:0;top:1039px;width:1921px;height:2px;background:#1f2328"></div>
</body></html>
